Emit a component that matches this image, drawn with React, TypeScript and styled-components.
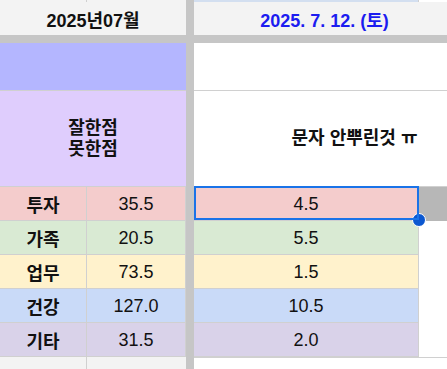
import React from 'react';
import styled, { createGlobalStyle } from 'styled-components';

const GRID = '#d0d0d0';
const HEADER_BG = '#f3f3f3';
const FROZEN = '#c6c6c6';

const GlobalStyle = createGlobalStyle`
  html, body {
    margin: 0;
    padding: 0;
    background: #fff;
    overflow: hidden;
  }
  body {
    font-family: 'Liberation Sans', 'Noto Sans CJK KR', Arial, sans-serif;
  }
  * {
    box-sizing: border-box;
  }
`;

const Viewport = styled.div`
  width: 100vw;
  height: 100vh;
  overflow: hidden;
`;

const Sheet = styled.div`
  display: grid;
  grid-template-columns: 87px 99px 8px 225px 36px 60px;
  grid-template-rows: 2px 33px 8px 48px 96px repeat(5, 34px) 12px;
  width: 515px;
  font-size: 18px;
  color: #111;
`;

const FrozenBar = styled.div<{ $vertical?: boolean }>`
  background: ${FROZEN};
  grid-column: ${({ $vertical }) => ($vertical ? '3' : '1 / -1')};
  grid-row: ${({ $vertical }) => ($vertical ? '1 / -1' : '3')};
`;

const StripCell = styled.div<{ $bg: string; $span?: number; $line?: boolean }>`
  background: ${({ $bg }) => $bg};
  grid-column: span ${({ $span }) => $span ?? 1};
  border-right: ${({ $line }) => ($line ? `1px solid ${GRID}` : 'none')};
`;

const HeaderCell = styled.div<{ $span?: number; $color?: string }>`
  grid-column: span ${({ $span }) => $span ?? 1};
  background: ${HEADER_BG};
  color: ${({ $color }) => $color ?? '#111'};
  font-weight: bold;
  display: flex;
  align-items: center;
  justify-content: center;
  white-space: nowrap;
`;

const BandCell = styled.div<{ $bg: string; $span: number; $bold?: boolean }>`
  grid-column: span ${({ $span }) => $span};
  background: ${({ $bg }) => $bg};
  border-bottom: 1px solid ${GRID};
  font-weight: ${({ $bold }) => ($bold ? 'bold' : 'normal')};
  display: flex;
  flex-direction: column;
  align-items: center;
  justify-content: center;
  line-height: 21px;
  white-space: nowrap;
`;

const DataCell = styled.div<{ $bg: string; $bold?: boolean }>`
  background: ${({ $bg }) => $bg};
  border-right: 1px solid ${GRID};
  border-bottom: 1px solid ${GRID};
  font-weight: ${({ $bold }) => ($bold ? 'bold' : 'normal')};
  display: flex;
  align-items: center;
  justify-content: center;
  padding-top: 1px;
`;

const SelectedCell = styled(DataCell)`
  position: relative;
  z-index: 2;
  &::after {
    content: '';
    position: absolute;
    inset: -1px -1px 0 0;
    border: 2px solid #1a73e8;
    pointer-events: none;
  }
`;

const FillHandle = styled.span`
  position: absolute;
  right: -8px;
  bottom: -7px;
  width: 14px;
  height: 14px;
  border-radius: 50%;
  background: #0b57d0;
  border: 1px solid #fff;
`;

const BlankCell = styled.div<{ $bg?: string; $span?: number; $top?: boolean; $right?: boolean }>`
  grid-column: span ${({ $span }) => $span ?? 1};
  background: ${({ $bg }) => $bg ?? '#fff'};
  border-top: ${({ $top }) => ($top ? `1px solid ${GRID}` : 'none')};
  border-right: ${({ $right }) => ($right ? `1px solid ${GRID}` : 'none')};
`;

type Row = { label: string; month: string; day: string; bg: string };

const rows: Row[] = [
  { label: '투자', month: '35.5', day: '4.5', bg: '#f4cccc' },
  { label: '가족', month: '20.5', day: '5.5', bg: '#d9ead3' },
  { label: '업무', month: '73.5', day: '1.5', bg: '#fff2cc' },
  { label: '건강', month: '127.0', day: '10.5', bg: '#c9daf8' },
  { label: '기타', month: '31.5', day: '2.0', bg: '#d9d2e9' },
];

export default function App() {
  return (
    <Viewport>
      <GlobalStyle />
      <Sheet>
        <FrozenBar $vertical />
        <FrozenBar />

        <StripCell $bg={HEADER_BG} $line />
        <StripCell $bg={HEADER_BG} />
        <StripCell $bg="#d3dff0" $line />
        <StripCell $bg="#fff" $span={2} />

        <HeaderCell $span={2}>2025년07월</HeaderCell>
        <HeaderCell $span={2} $color="#1c1cf0">
          2025. 7. 12. (토)
        </HeaderCell>
        <HeaderCell />

        <BandCell $bg="#b4b6ff" $span={2} />
        <BandCell $bg="#fff" $span={3} />

        <BandCell $bg="#dfcdfd" $span={2} $bold>
          <span>잘한점</span>
          <span>못한점</span>
        </BandCell>
        <BandCell $bg="#fff" $span={3} $bold>
          문자 안뿌린것 ㅠ
        </BandCell>

        {rows.map((row, i) => (
          <React.Fragment key={row.label}>
            <DataCell $bg={row.bg} $bold>
              {row.label}
            </DataCell>
            <DataCell $bg={row.bg}>{row.month}</DataCell>
            {i === 0 ? (
              <SelectedCell $bg={row.bg}>
                {row.day}
                <FillHandle />
              </SelectedCell>
            ) : (
              <DataCell $bg={row.bg}>{row.day}</DataCell>
            )}
            <BlankCell $bg={i === 0 ? '#b7b7b7' : '#fff'} />
            <BlankCell />
          </React.Fragment>
        ))}

        <BlankCell $bg={HEADER_BG} $right />
        <BlankCell $bg={HEADER_BG} />
        <BlankCell $span={3} $top />
      </Sheet>
    </Viewport>
  );
}
